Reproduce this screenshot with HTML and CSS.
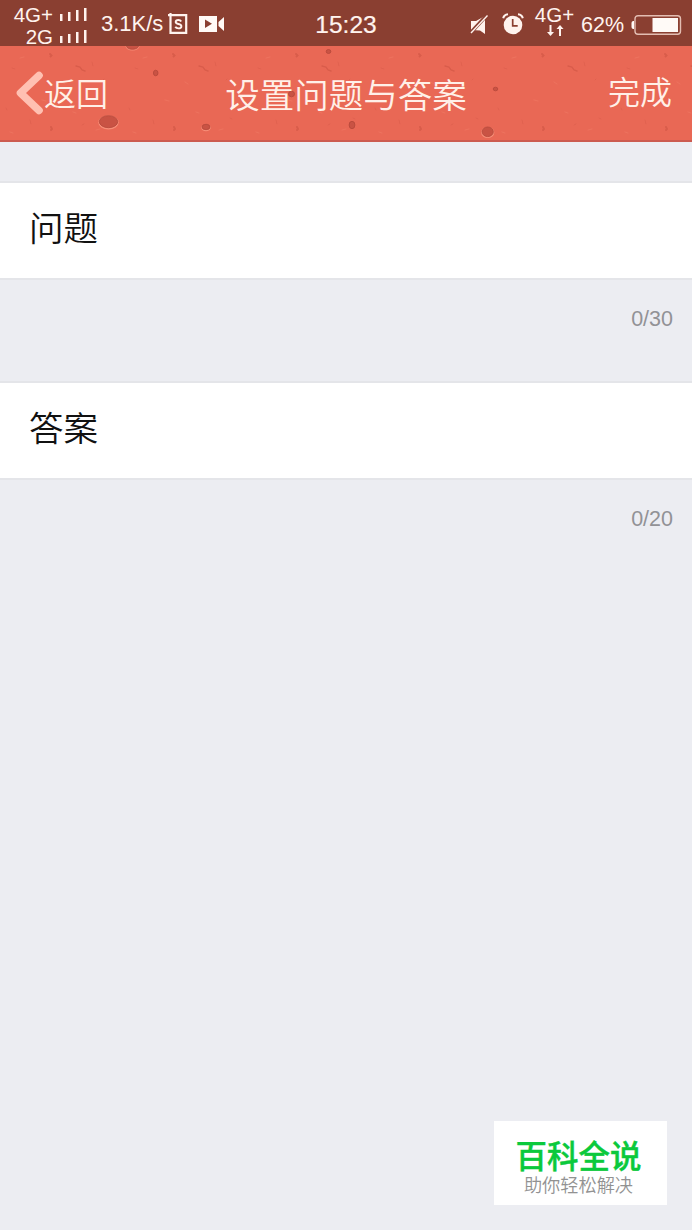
FILE: index.html
```html
<!DOCTYPE html>
<html lang="zh-CN">
<head>
  <meta charset="UTF-8">
  <title>设置问题与答案</title>
  <link rel="stylesheet" href="styles.css">
</head>
<body>

<!-- status bar -->
<div class="status">
  <div class="status-left">
    <div class="carriers">
      <div class="carrier">
        <span>4G+</span>
        <svg width="27" height="14" fill="#fff3ee"><path d="M0 6h2.5v7H0zM8 4h2.5v9H8zM16 2h2.5v11H16zM24 0h2.5v13H24z"/></svg>
      </div>
      <div class="carrier">
        <span>2G</span>
        <svg width="27" height="14" fill="#fff3ee"><path d="M0 6h2.5v7H0zM8 4h2.5v9H8zM16 2h2.5v11H16zM24 0h2.5v13H24z"/></svg>
      </div>
    </div>
    <span class="speed">3.1K/s</span>
    <svg class="icon-s" width="20" height="22" fill="none" stroke="#fff3ee">
      <path d="M0 2.200h18.200v17.600H2.500V0" stroke-width="2.2"/>
      <path d="M13.200 8.400c-.6-1-1.600-1.400-2.800-1.400-1.500 0-2.700.7-2.700 2 0 3 5.700.9 5.700 4.200 0 1.400-1.300 2.200-3 2.200-1.400 0-2.500-.5-3.100-1.600" stroke-width="1.9"/>
    </svg>
    <svg class="icon-cam" width="26" height="18">
      <path d="M0 1h18v16H0zM19.500 7l5.500-5v14l-5.500-5z" fill="#fffaf7"/>
      <path d="M6 4.500v8.500l7-4.200z" fill="#8a3f31"/>
    </svg>
  </div>
  <span class="clock">15:23</span>
  <div class="status-right">
    <svg class="icon-mute" width="19" height="20">
      <path d="M1 6h5l9-5v18l-5-3.500-9-.5z" fill="#fff3ee"/>
      <path d="M0 18.500L17 0" stroke="#8a3f31" stroke-width="3.600"/>
      <path d="M1 18L17.500 0.500" stroke="#fff3ee" stroke-width="1.400"/>
    </svg>
    <svg class="icon-alarm" width="22" height="22" fill="none" stroke="#fff3ee">
      <circle cx="11" cy="12" r="9.300" fill="#fff3ee" stroke="none"/>
      <path d="M1.200 5.300Q2 1.700 6 1.300M16 1.300q4 .4 4.800 4" stroke-width="2"/>
      <path d="M10.700 6v6.800h5" stroke="#8a3f31" stroke-width="1.700"/>
    </svg>
    <div class="data">
      <span>4G+</span>
      <svg width="18" height="12" fill="#fff3ee"><path d="M3.500 0h2v7H8l-3.500 4L1 7h2.500zM13 11h2V4h2.500L14 0l-3.500 4H13z"/></svg>
    </div>
    <span class="percent">62%</span>
    <svg class="icon-battery" width="51" height="20">
      <rect x="4" y=".7" width="45.500" height="18.500" rx="3" fill="none" stroke="#e3bdb2" stroke-width="1.400"/>
      <path d="M3 6v8H2a2 2 0 0 1-1.500-2V8A2 2 0 0 1 2 6zM21.500 3H47v14H21.500z" fill="#fffaf7"/>
    </svg>
  </div>
</div>

<!-- title bar -->
<div class="header">
  <svg class="texture" width="692" height="96">
    <defs>
      <pattern id="grain" width="123" height="96" patternUnits="userSpaceOnUse">
        <g fill="none" stroke="#c9503f" stroke-linecap="round" opacity=".5">
          <path d="M50 8l1.500 1.500-1 1M51 81l1 2-1 1" stroke-width="2"/>
          <path d="M76 20l4 1 2 3 3 1" stroke-width="1.400"/>
          <path d="M12 22l3 1M30 74l1 4M92 16l1 4M107 72l2 1M103 34l1-1M6 62l1 2M84 78l-2 1" stroke-width="1" opacity=".6"/>
        </g>
        <g fill="none" stroke="#f58770" stroke-linecap="round" opacity=".3">
          <path d="M20 12l4-1M62 36l3 2M42 54l4 1M96 84l4-1M73 66l3 1M10 86l3 1"/>
        </g>
      </pattern>
    </defs>
    <rect width="692" height="96" fill="url(#grain)"/>
    <g fill="#f78d77">
      <ellipse cx="108.500" cy="76.500" rx="10.200" ry="6.900"/>
      <ellipse cx="206" cy="81.800" rx="4.800" ry="3.400"/>
      <ellipse cx="487.700" cy="86.500" rx="6.600" ry="5.600"/>
      <ellipse cx="132.500" cy="0" rx="7" ry="4.500"/>
    </g>
    <g fill="#c95344" stroke="#b5483a" stroke-width=".8">
      <ellipse cx="108.500" cy="75.700" rx="9.200" ry="6"/>
      <ellipse cx="206" cy="81" rx="4" ry="2.700"/>
      <ellipse cx="487.700" cy="85.800" rx="5.600" ry="4.800"/>
      <ellipse cx="132.500" cy="0" rx="6" ry="3.300"/>
      <ellipse cx="155.700" cy="27" rx="2.300" ry="2.800"/>
      <ellipse cx="328.500" cy="5.500" rx="2.300" ry="2"/>
      <ellipse cx="352" cy="79" rx="2.900" ry="3.700"/>
      <ellipse cx="291.500" cy="48" rx="3" ry="2.800"/>
      <ellipse cx="495.500" cy="43" rx="2.300" ry="1.800"/>
    </g>
  </svg>
  <div class="back">
    <svg width="28" height="44"><path d="M23 4.500L4.500 22 23 39.500" fill="none" stroke="#ffc0b2" stroke-width="7.600" stroke-linecap="round" stroke-linejoin="round"/></svg>
    <span>返回</span>
  </div>
  <div class="title">设置问题与答案</div>
  <div class="done">完成</div>
</div>

<!-- form -->
<div class="form">
  <div class="field">问题</div>
  <div class="count">0/30</div>
  <div class="field">答案</div>
  <div class="count">0/20</div>
</div>

<div class="watermark">
  <div class="brand">百科全说</div>
  <div class="slogan">助你轻松解决</div>
</div>

</body>
</html>
```
FILE: styles.css
```css
* {
  box-sizing: border-box;
}
body {
  margin: 0;
  height: 1230px;
  display: flex;
  flex-direction: column;
  overflow: hidden;
  background: #ecedf2;
  font-family: "Liberation Sans", "Noto Sans CJK SC", sans-serif;
  white-space: nowrap;
}
svg {
  display: block;
  flex: none;
}

.status {
  height: 46px;
  padding: 0 11px;
  display: grid;
  grid-template-columns: 1fr auto 1fr;
  background: #8a3f31;
  color: #fff3ee;
}
.status-left,
.status-right {
  display: flex;
  align-items: center;
}
.status-left {
  padding-bottom: 2px;
}
.status-right {
  justify-content: flex-end;
}
.carriers {
  width: 76px;
  padding-top: 4px;
}
.carrier {
  height: 22px;
  display: flex;
  justify-content: flex-end;
  align-items: center;
  gap: 7px;
  font-size: 20.5px;
  line-height: 22px;
}
.speed {
  width: 67px;
  margin-left: 14px;
  font-size: 22px;
  line-height: 46px;
}
.icon-cam {
  margin-left: 11px;
  margin-bottom: 1px;
}
.clock {
  font-size: 24.5px;
  line-height: 50px;
  -webkit-text-stroke: 0.2px;
}
.icon-mute {
  margin-bottom: 1px;
}
.icon-alarm {
  margin-left: 13px;
  margin-bottom: 2px;
}
.data {
  width: 41px;
  height: 46px;
  margin-left: 10px;
  padding-top: 3px;
  display: flex;
  flex-direction: column;
  align-items: center;
  font-size: 20.5px;
  line-height: 20px;
}
.percent {
  width: 44px;
  margin: 0 6px;
  font-size: 21.5px;
}
.icon-battery {
  margin-right: -1px;
  margin-bottom: 1px;
}

.header {
  height: 96px;
  position: relative;
  display: grid;
  grid-template-columns: 1fr auto 1fr;
  align-items: center;
  background: #e96855;
  border-bottom: 2px solid #cc5b50;
  color: #fff0e8;
  font-family: "Noto Sans CJK SC", sans-serif;
  font-weight: 350;
}
.texture {
  position: absolute;
  top: 0;
  left: 0;
}
.back,
.title,
.done {
  position: relative;
}
.back {
  padding-left: 16px;
  display: flex;
  align-items: center;
  font-size: 32px;
}
.back span {
  padding-bottom: 2px;
}
.title {
  font-size: 34.5px;
}
.done {
  padding: 0 20px 6px 0;
  text-align: right;
  font-size: 32px;
}

.form {
  flex: 1;
  padding-top: 39px;
}
.field {
  height: 99px;
  padding-left: 29px;
  background: #fff;
  border-top: 2px solid #e4e5e9;
  border-bottom: 2px solid #e4e5e9;
  color: #111;
  font-family: "Noto Sans CJK SC", sans-serif;
  font-size: 34.5px;
  font-weight: 350;
  line-height: 87px;
}
.count {
  height: 100.5px;
  padding-right: 19px;
  text-align: right;
  color: #929296;
  font-size: 21.5px;
  line-height: 78px;
}

.watermark {
  width: 173px;
  height: 84px;
  margin: 0 25px 25px auto;
  padding: 13px 4px 0 0;
  background: #fff;
  text-align: center;
  font-family: "Noto Sans CJK SC", sans-serif;
}
.brand {
  color: #0bc93c;
  font-size: 31.5px;
  font-weight: 500;
  line-height: 40px;
  -webkit-text-stroke: 0.4px;
}
.slogan {
  color: #929292;
  font-size: 18.2px;
  font-weight: 350;
  line-height: 20px;
}
```
